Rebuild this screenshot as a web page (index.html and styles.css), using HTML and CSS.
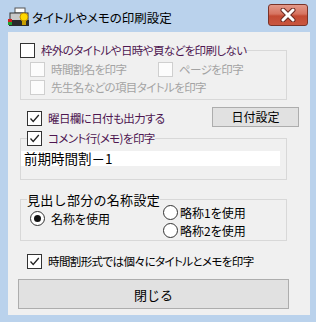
FILE: index.html
```html
<!DOCTYPE html>
<html lang="ja">
<head>
    <meta charset="UTF-8">
    <title>タイトルやメモの印刷設定</title>
    <link rel="stylesheet" href="styles.css">
</head>
<body>
    <div class="window">
        <div class="titlebar">
            <svg class="app-icon" width="23" height="20" viewBox="0 0 23 20">
                <rect x="7" y="1" width="10" height="5" fill="#ffffff" stroke="#555" stroke-width="1"/>
                <rect x="2" y="6" width="18" height="8" fill="#c8c8c8" stroke="#333" stroke-width="1"/>
                <rect x="1" y="13" width="20" height="6" fill="#2a2a2a"/>
                <rect x="0" y="12" width="4" height="3" fill="#d02020"/>
                <rect x="0" y="15" width="4" height="3" fill="#20a030"/>
                <circle cx="16" cy="10" r="4" fill="#ffd800" stroke="#c09000" stroke-width="1"/>
                <rect x="14" y="14" width="4" height="4" fill="#c8a000"/>
            </svg>
            <span class="title">タイトルやメモの印刷設定</span>
            <div class="close-x">
                <svg width="16" height="14" viewBox="0 0 16 14">
                    <path d="M3 2 L13 12 M13 2 L3 12" stroke="#6a2a22" stroke-width="5" stroke-linecap="round"/>
                    <path d="M3 2 L13 12 M13 2 L3 12" stroke="#ffffff" stroke-width="3" stroke-linecap="round"/>
                </svg>
            </div>
        </div>

        <div class="content">
            <fieldset class="group group-frame">
                <legend class="head">
                    <span class="check"><span class="box"></span><span class="label purple">枠外のタイトルや日時や頁などを印刷しない</span></span>
                </legend>
                <div class="sub-row">
                    <span class="check disabled first-col"><span class="box"></span><span class="label">時間割名を印字</span></span>
                    <span class="check disabled"><span class="box"></span><span class="label">ページを印字</span></span>
                </div>
                <div class="sub-row">
                    <span class="check disabled"><span class="box"></span><span class="label">先生名などの項目タイトルを印字</span></span>
                </div>
            </fieldset>

            <div class="date-row">
                <span class="check">
                    <span class="box"><svg width="13" height="13" viewBox="0 0 13 13"><path d="M2.5 6.5 L5.2 9.5 L10.8 3" fill="none" stroke="#222" stroke-width="1.3"/></svg></span>
                    <span class="label purple">曜日欄に日付も出力する</span>
                </span>
                <button class="btn date-btn">日付設定</button>
            </div>

            <fieldset class="group group-memo">
                <legend class="head memo-head">
                    <span class="check">
                        <span class="box"><svg width="13" height="13" viewBox="0 0 13 13"><path d="M2.5 6.5 L5.2 9.5 L10.8 3" fill="none" stroke="#222" stroke-width="1.3"/></svg></span>
                        <span class="label purple">コメント行(メモ)を印字</span>
                    </span>
                </legend>
                <div class="memo-field">前期時間割－1</div>
            </fieldset>

            <fieldset class="group group-names">
                <legend class="names-head">見出し部分の名称設定</legend>
                <div class="radios">
                    <span class="radio selected name-radio"><span class="dot"></span><span class="label">名称を使用</span></span>
                    <div class="radio-col">
                        <span class="radio"><span class="dot"></span><span class="label">略称1を使用</span></span>
                        <span class="radio"><span class="dot"></span><span class="label">略称2を使用</span></span>
                    </div>
                </div>
            </fieldset>

            <span class="check last-check">
                <span class="box"><svg width="13" height="13" viewBox="0 0 13 13"><path d="M2.5 6.5 L5.2 9.5 L10.8 3" fill="none" stroke="#222" stroke-width="1.3"/></svg></span>
                <span class="label">時間割形式では個々にタイトルとメモを印字</span>
            </span>

            <button class="btn close-btn">閉じる</button>
        </div>
    </div>
</body>
</html>
```

FILE: styles.css
```css
body {
    margin: 0;
    font-family: "Noto Sans CJK JP", "Noto Sans", sans-serif;
    font-size: 12px;
    color: #000;
}
.window {
    width: 316px;
    height: 322px;
    background-color: #bad2ec;
    overflow: hidden;
}
.titlebar {
    height: 32px;
    display: flex;
    align-items: center;
    padding-left: 8px;
    box-sizing: border-box;
}
.app-icon {
    margin-top: 2px;
    flex: none;
}
.title {
    margin-left: 1px;
    font-size: 12.5px;
    font-feature-settings: "palt";
    margin-top: 2px;
}
.close-x {
    margin-left: auto;
    margin-right: 8px;
    margin-top: -2px;
    width: 40px;
    height: 22px;
    box-sizing: border-box;
    border: 1px solid #7a3328;
    border-radius: 3px;
    background: linear-gradient(#e3998a 0%, #d67360 45%, #c34a33 55%, #c9563f 100%);
    display: flex;
    align-items: center;
    justify-content: center;
}
.content {
    margin: 0 6px 0 8px;
    height: 283px;
    background-color: #f0f0f0;
    padding-top: 11px;
    box-sizing: border-box;
}
.group {
    margin: 0 0 0 12px;
    padding: 0;
    width: 267px;
    box-sizing: border-box;
    border: 1px solid #d8d8d8;
    min-inline-size: 0;
}
.head {
    padding: 0;
    margin-left: -1px;
    height: 15px;
    line-height: 15px;
}
.check {
    display: flex;
    align-items: center;
    height: 15px;
    line-height: 15px;
}
.box {
    width: 15px;
    height: 15px;
    box-sizing: border-box;
    border: 1px solid #333;
    background-color: #fff;
    flex: none;
    display: flex;
    align-items: center;
    justify-content: center;
}
.label {
    margin-left: 6px;
    white-space: nowrap;
    font-feature-settings: "palt";
}
.check .label {
    font-size: 11.5px;
    letter-spacing: -0.6px;
}
.purple {
    color: #4e1650;
}
.disabled .box {
    border-color: #cfcfcf;
    background-color: #fcfcfc;
}
.disabled .label {
    color: #a3a3a3;
}
.sub-row {
    display: flex;
    padding-left: 9px;
    margin-top: 3px;
}
.sub-row:first-of-type {
    margin-top: 4px;
}
.group-frame {
    padding-bottom: 4px;
}
.first-col {
    width: 128px;
}
.date-row {
    display: flex;
    margin-top: 7px;
    padding-left: 19px;
    height: 20px;
}
.date-row .check {
    margin-top: 4px;
}
.btn {
    font-family: "Noto Sans CJK JP", "Noto Sans", sans-serif;
    font-size: 12px;
    color: #000;
    background-color: #e1e1e1;
    border: 1px solid #adadad;
    padding: 0;
    box-sizing: border-box;
}
.date-btn {
    margin-left: auto;
    margin-right: 11px;
    width: 87px;
    height: 20px;
    line-height: 18px;
}
.group-memo {
    margin-top: 4px;
    padding-bottom: 13px;
}
.memo-head {
    margin-left: 6px;
}
.memo-field {
    margin-top: 5px;
    width: 259px;
    height: 15px;
    line-height: 15px;
    background-color: #fff;
    font-size: 13.5px;
    padding-left: 3px;
    box-sizing: border-box;
}
.group-names {
    margin-top: 12px;
    padding-bottom: 2px;
}
.names-head {
    padding: 0;
    margin-left: 6px;
    height: 15px;
    line-height: 15px;
    font-size: 13px;
    letter-spacing: 0.3px;
}
.radios {
    display: flex;
    margin-top: -2px;
    padding-left: 9px;
}
.radio {
    display: flex;
    align-items: center;
    height: 15px;
    line-height: 15px;
}
.name-radio {
    width: 133px;
    margin-top: 6px;
}
.radio-col {
    display: flex;
    flex-direction: column;
    gap: 3px;
}
.radio-col .label {
    margin-left: 2px;
}
.dot {
    width: 15px;
    height: 15px;
    box-sizing: border-box;
    border: 1px solid #333;
    border-radius: 50%;
    background-color: #fff;
    flex: none;
    display: flex;
    align-items: center;
    justify-content: center;
}
.selected .dot::after {
    content: "";
    width: 7px;
    height: 7px;
    border-radius: 50%;
    background-color: #111;
}
.last-check {
    margin-top: 13px;
    margin-left: 19px;
}
.close-btn {
    display: block;
    margin: 10px 0 0 10px;
    width: 271px;
    height: 30px;
    font-size: 13px;
}
```
